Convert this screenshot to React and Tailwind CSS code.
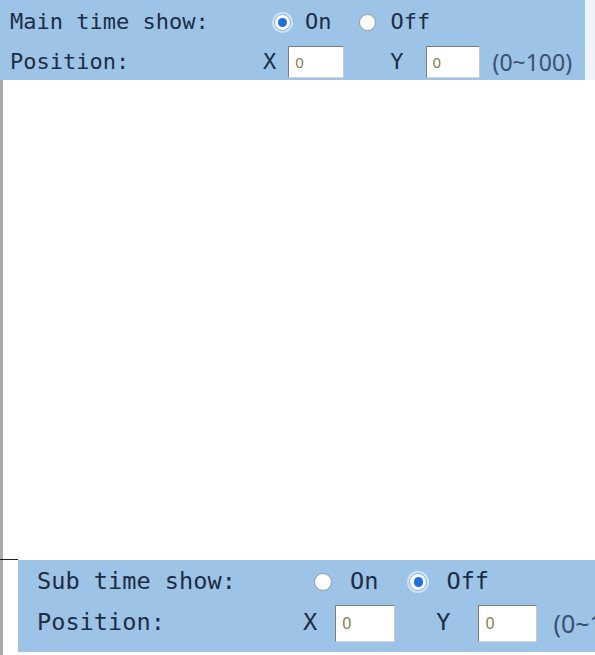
import React from "react";

const mono = { fontFamily: '"DejaVu Sans Mono", "Liberation Mono", monospace' };
const sans = { fontFamily: '"Noto Sans", "Liberation Sans", sans-serif' };

function Radio({ checked, size }) {
  return checked ? (
    <span
      className={`flex items-center justify-center rounded-full border border-[#7fb2e6] bg-white shadow-[0_0_0_2px_#cfe4f7] ${size}`}
    >
      <span className="h-[60%] w-[60%] rounded-full bg-[#1f6fe0]" />
    </span>
  ) : (
    <span className={`rounded-full border border-[#8d9bab] bg-white ${size}`} />
  );
}

function Box({ cls, textCls }) {
  return (
    <div
      className={`flex items-center border border-[#7c7c7c] border-r-[#c9c9c9] border-b-[#d6d6d6] bg-white pl-[6px] ${cls}`}
    >
      <span className={`text-[#8a7a4e] ${textCls}`} style={sans}>0</span>
    </div>
  );
}

export default function App() {
  return (
    <div className="flex h-[655px] w-[595px] flex-col overflow-hidden bg-white">
      {/* main time settings */}
      <div className="flex">
        <div className="flex h-[80px] w-[585px] flex-col bg-[#9dc3e7] pl-[10px] text-[22px] leading-none text-[#1c2d45] whitespace-nowrap" style={mono}>
          <div className="flex h-[44px] items-center">
            <span className="w-[264px]">Main time show:</span>
            <Radio checked size="h-[17px] w-[17px]" />
            <span className="ml-[14px]">On</span>
            <span className="ml-[27px]"><Radio size="h-[17px] w-[17px] block" /></span>
            <span className="ml-[15px]">Off</span>
          </div>
          <div className="flex h-[36px] items-center">
            <span className="w-[253px]">Position:</span>
            <span>X</span>
            <Box cls="ml-[12px] h-[32px] w-[56px]" textCls="text-[15px]" />
            <span className="ml-[46px]">Y</span>
            <Box cls="ml-[22px] h-[32px] w-[54px]" textCls="text-[15px]" />
            <span className="ml-[13px] text-[23px] text-[#3a5070]" style={sans}>(0~100)</span>
          </div>
        </div>
        <div className="h-[80px] flex-1 bg-[#edf3f9]" />
      </div>

      {/* preview area */}
      <div className="flex flex-1 flex-col border-l-[3px] border-[#a9a9a9]">
        <div className="h-[479px] bg-white" />
        <div className="-ml-[3px] h-[1px] w-[18px] bg-[#222]" />
        <div className="flex flex-1">
          <div className="w-[15px]" />
          <div className="flex flex-col">
            {/* sub time settings */}
            <div className="flex h-[92px] w-[577px] flex-col overflow-hidden bg-[#9dc3e7] pl-[19px] text-[23.6px] leading-none text-[#1c2d45] whitespace-nowrap" style={mono}>
              <div className="flex h-[40px] shrink-0 items-center pt-[4px]">
                <span className="w-[277px] shrink-0">Sub time show:</span>
                <Radio size="h-[18px] w-[18px] shrink-0" />
                <span className="ml-[18px]">On</span>
                <span className="ml-[31px]"><Radio checked size="h-[18px] w-[18px]" /></span>
                <span className="ml-[19px]">Off</span>
              </div>
              <div className="flex h-[46px] shrink-0 items-center">
                <span className="w-[266px] shrink-0">Position:</span>
                <span>X</span>
                <Box cls="ml-[18px] h-[37px] w-[60px] shrink-0" textCls="text-[16px]" />
                <span className="ml-[41px]">Y</span>
                <Box cls="ml-[28px] h-[37px] w-[59px] shrink-0" textCls="text-[16px]" />
                <span className="ml-[16px] text-[25px] text-[#3a5070]" style={sans}>(0~100)</span>
              </div>
            </div>
          </div>
        </div>
      </div>
    </div>
  );
}
